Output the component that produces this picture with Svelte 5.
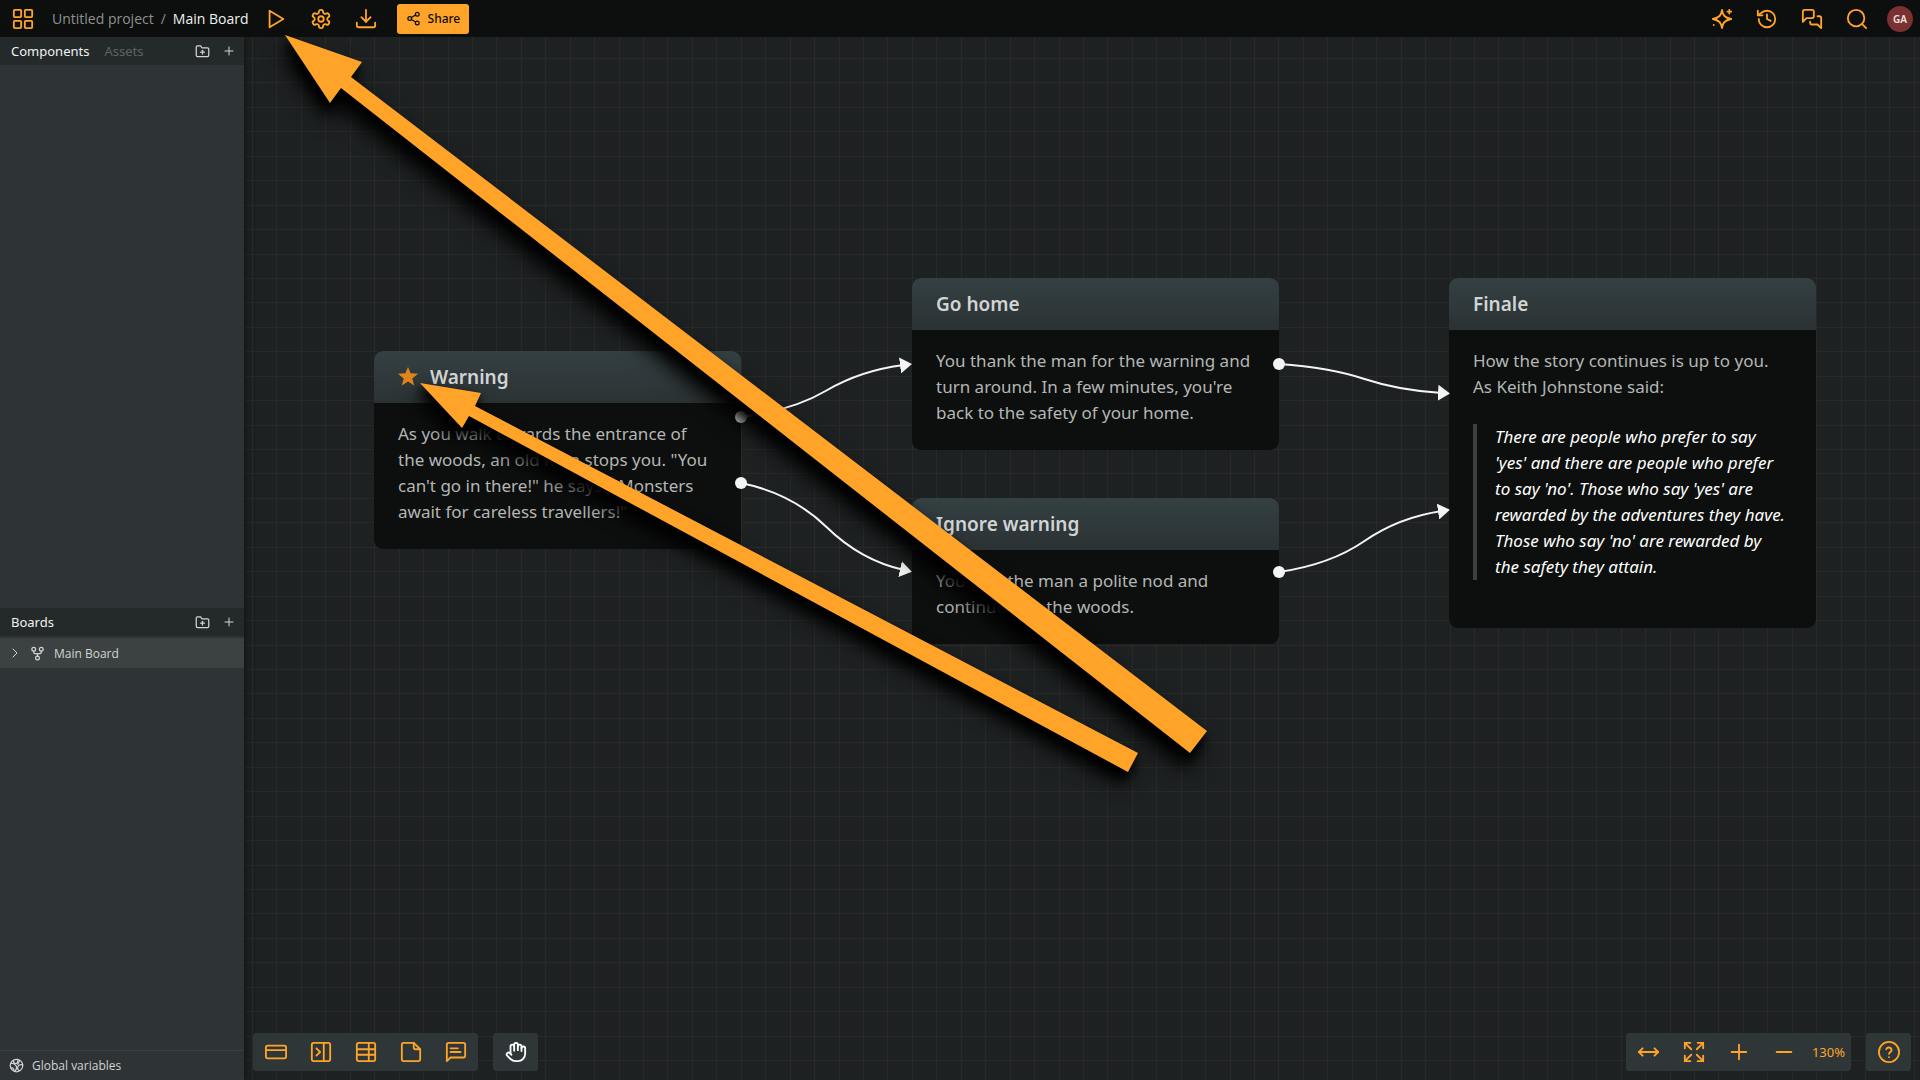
<script lang="ts">
	const icons: Record<string, string[]> = {
		grid: ['M3 2h6a1 1 0 0 1 1 1v6a1 1 0 0 1-1 1H3a1 1 0 0 1-1-1V3a1 1 0 0 1 1-1z', 'M15 2h6a1 1 0 0 1 1 1v6a1 1 0 0 1-1 1h-6a1 1 0 0 1-1-1V3a1 1 0 0 1 1-1z', 'M3 14h6a1 1 0 0 1 1 1v6a1 1 0 0 1-1 1H3a1 1 0 0 1-1-1v-6a1 1 0 0 1 1-1z', 'M15 14h6a1 1 0 0 1 1 1v6a1 1 0 0 1-1 1h-6a1 1 0 0 1-1-1v-6a1 1 0 0 1 1-1z'],
		play: ['M5 3v18l15-9z'],
		gear: ['M12.22 2h-.44a2 2 0 0 0-2 2v.18a2 2 0 0 1-1 1.73l-.43.25a2 2 0 0 1-2 0l-.15-.08a2 2 0 0 0-2.73.73l-.22.38a2 2 0 0 0 .73 2.73l.15.1a2 2 0 0 1 1 1.72v.51a2 2 0 0 1-1 1.74l-.15.09a2 2 0 0 0-.73 2.73l.22.38a2 2 0 0 0 2.73.73l.15-.08a2 2 0 0 1 2 0l.43.25a2 2 0 0 1 1 1.73V20a2 2 0 0 0 2 2h.44a2 2 0 0 0 2-2v-.18a2 2 0 0 1 1-1.73l.43-.25a2 2 0 0 1 2 0l.15.08a2 2 0 0 0 2.73-.73l.22-.39a2 2 0 0 0-.73-2.73l-.15-.08a2 2 0 0 1-1-1.74v-.5a2 2 0 0 1 1-1.74l.15-.09a2 2 0 0 0 .73-2.73l-.22-.38a2 2 0 0 0-2.73-.73l-.15.08a2 2 0 0 1-2 0l-.43-.25a2 2 0 0 1-1-1.73V4a2 2 0 0 0-2-2z', 'M9 12a3 3 0 1 0 6 0 3 3 0 1 0-6 0'],
		download: ['M12 2v13', 'M7 10l5 5 5-5', 'M2 16v3a2 2 0 0 0 2 2h16a2 2 0 0 0 2-2v-3'],
		share: ['M15 5a3 3 0 1 0 6 0 3 3 0 1 0-6 0', 'M3 12a3 3 0 1 0 6 0 3 3 0 1 0-6 0', 'M15 19a3 3 0 1 0 6 0 3 3 0 1 0-6 0', 'M8.6 13.5l6.8 4', 'M15.4 6.5l-6.8 4'],
		sparkle: ['M12 2c.8 6 3 8.600 10 10-7 1.400-9.200 4-10 10-.8-6-3-8.600-10-10 7-1.400 9.200-4 10-10z', 'M20 2v4', 'M18 4h4', 'M3 18.500v.1'],
		history: ['M3 12a9 9 0 1 0 9-9 9.75 9.75 0 0 0-6.74 2.74L2 8', 'M2 3v5h5', 'M12 7v5l4 2'],
		chats: ['M14 9a2 2 0 0 1-2 2H6l-4 4V4c0-1.100.9-2 2-2h8a2 2 0 0 1 2 2v5Z', 'M18 9h2a2 2 0 0 1 2 2v11l-4-4h-6a2 2 0 0 1-2-2v-1'],
		search: ['M2 11a9 9 0 1 0 18 0 9 9 0 1 0-18 0', 'M22 22l-4.600-4.600'],
		folder: ['M20 20H4a2 2 0 0 1-2-2V5a2 2 0 0 1 2-2h5l2 3h9a2 2 0 0 1 2 2v10a2 2 0 0 1-2 2z', 'M12 10v6', 'M9 13h6'],
		plus: ['M4 12h16', 'M12 4v16'],
		minus: ['M4 12h16'],
		chevron: ['M8 4l8 8-8 8'],
		board: ['M3 5a3 3 0 1 0 6 0 3 3 0 1 0-6 0', 'M15 5a3 3 0 1 0 6 0 3 3 0 1 0-6 0', 'M9 19a3 3 0 1 0 6 0 3 3 0 1 0-6 0', 'M6 8v2a2 2 0 0 0 2 2h8a2 2 0 0 0 2-2V8', 'M12 12v4'],
		globe: ['M2 12a10 10 0 1 0 20 0 10 10 0 1 0-20 0', 'M3 8c4 0 6 1 8 4s1 6-1 9', 'M7 4c0 4 2 5 4 5s4-3 3-7', 'M22 11c-4-1-7 0-8 3s1 6 3 6', 'M3 16c2-1 4 0 5 4', 'M17 4l-3 6'],
		card: ['M3 5h18a2 2 0 0 1 2 2v10a2 2 0 0 1-2 2H3a2 2 0 0 1-2-2V7a2 2 0 0 1 2-2z', 'M1 10h22'],
		panel: ['M4 2h16a2 2 0 0 1 2 2v16a2 2 0 0 1-2 2H4a2 2 0 0 1-2-2V4a2 2 0 0 1 2-2z', 'M15 2v20', 'M7 8l4 4-4 4'],
		table: ['M4 2h16a2 2 0 0 1 2 2v16a2 2 0 0 1-2 2H4a2 2 0 0 1-2-2V4a2 2 0 0 1 2-2z', 'M15 2v20', 'M2 9h20', 'M2 15h20'],
		note: ['M15 2H4a2 2 0 0 0-2 2v16a2 2 0 0 0 2 2h16a2 2 0 0 0 2-2V9z', 'M15 2v5a2 2 0 0 0 2 2h5'],
		comment: ['M22 16a2 2 0 0 1-2 2H6l-4 4V4a2 2 0 0 1 2-2h16a2 2 0 0 1 2 2z', 'M6 8h8', 'M6 12h11'],
		hand: ['M18 11V6a2 2 0 0 0-4 0', 'M14 10V4a2 2 0 0 0-4 0v2', 'M10 10.500V6a2 2 0 0 0-4 0v8', 'M18 8a2 2 0 1 1 4 0v6a8 8 0 0 1-8 8h-2c-2.800 0-4.500-.86-5.990-2.340l-3.600-3.600a2 2 0 0 1 2.830-2.820L7 15'],
		width: ['M18 8l4 4-4 4', 'M1 12h21', 'M5 8l-4 4 4 4'],
		expand: ['M15 15l7 7', 'M15 9l7-7', 'M22 16v6h-6', 'M22 8V2h-6', 'M2 16v6h6', 'M2 22l7-7', 'M2 8V2h6', 'M9 9L2 2'],
		help: ['M1 12a11 11 0 1 0 22 0 11 11 0 1 0-22 0', 'M9 9a3 3 0 0 1 5.800 1c0 2-2.800 2.500-2.800 4', 'M12 17.500v.1'],
	};

	const tools = [
		{ icon: 'card', label: 'Element' },
		{ icon: 'panel', label: 'Jumper' },
		{ icon: 'table', label: 'Branch' },
		{ icon: 'note', label: 'Note' },
		{ icon: 'comment', label: 'Comment' },
	];

	const zoomTools = [
		{ icon: 'width', label: 'Fit width' },
		{ icon: 'expand', label: 'Fit board' },
		{ icon: 'plus', label: 'Zoom in' },
		{ icon: 'minus', label: 'Zoom out' },
	];

	const topRight = [
		{ icon: 'sparkle', label: 'Assistant' },
		{ icon: 'history', label: 'History' },
		{ icon: 'chats', label: 'Comments' },
		{ icon: 'search', label: 'Search' },
	];

	// Board coordinates, origin at the top left of the canvas
	const nodes = [
		{ id: 'warning', x: 130, y: 314, title: 'Warning', start: true, text: `As you walk towards the entrance of the woods, an old man stops you. "You can't go in there!" he says. "Monsters await for careless travellers!"` },
		{ id: 'home', x: 668, y: 241, title: 'Go home', text: `You thank the man for the warning and turn around. In a few minutes, you're back to the safety of your home.` },
		{ id: 'ignore', x: 668, y: 461, title: 'Ignore warning', text: 'You give the man a polite nod and continue into the woods.' },
		{
			id: 'finale',
			x: 1205,
			y: 241,
			title: 'Finale',
			text: 'How the story continues is up to you.\nAs Keith Johnstone said:',
			quote: `There are people who prefer to say 'yes' and there are people who prefer to say 'no'. Those who say 'yes' are rewarded by the adventures they have. Those who say 'no' are rewarded by the safety they attain.`,
		},
	];

	const edges = [
		{ x1: 497, y1: 380, x2: 668, y2: 327 },
		{ x1: 497, y1: 446, x2: 668, y2: 534 },
		{ x1: 1035, y1: 327, x2: 1206, y2: 357 },
		{ x1: 1035, y1: 535, x2: 1206, y2: 473 },
	];

	function edgePath({ x1, y1, x2, y2 }: { x1: number; y1: number; x2: number; y2: number }) {
		const dx = x2 - x1;
		const dy = y2 - y1;
		const back = dy > 0 ? -1 : 1;
		return `M${x1} ${y1}Q${x1 + dx * 0.3} ${y1 + dy * 0.12} ${x1 + dx / 2} ${y1 + dy / 2}Q${x2 - dx * 0.3} ${y2 - dy * 0.12} ${x2 - 8} ${y2 + back}`;
	}

	const zoom = 1.3;
	const cell = 18.8 * zoom;
	const columns = Array.from({ length: 160 }, (_, i) => Math.round(8 + i * cell));
	const rows = Array.from({ length: 90 }, (_, i) => Math.round(21 + i * cell));
</script>

{#snippet icon(name: string, size = 'md')}
	<svg class="icon {size}" viewBox="0 0 24 24" aria-hidden="true">
		{#each icons[name] as d}
			<path {d} />
		{/each}
	</svg>
{/snippet}

<div class="app">
	<header class="topbar">
		<button class="tool" aria-label="Projects">{@render icon('grid')}</button>
		<nav class="crumbs">
			<a href="#project">Untitled project</a>
			<span>/</span>
			<a class="current" href="#board">Main Board</a>
		</nav>
		<button class="tool" aria-label="Play">{@render icon('play')}</button>
		<button class="tool" aria-label="Settings">{@render icon('gear')}</button>
		<button class="tool" aria-label="Export">{@render icon('download')}</button>
		<button class="share">{@render icon('share', 'sm')}Share</button>
		<div class="spacer"></div>
		{#each topRight as item}
			<button class="tool" aria-label={item.label}>{@render icon(item.icon)}</button>
		{/each}
		<button class="avatar">GA</button>
	</header>

	<div class="main">
		<aside class="sidebar">
			<section class="components">
				<div class="panel-head">
					<button class="tab active">Components</button>
					<button class="tab">Assets</button>
					<div class="spacer"></div>
					<button class="mini" aria-label="New component folder">{@render icon('folder', 'sm')}</button>
					<button class="mini" aria-label="New component">{@render icon('plus', 'xs')}</button>
				</div>
			</section>
			<section class="boards">
				<div class="panel-head">
					<h2>Boards</h2>
					<div class="spacer"></div>
					<button class="mini" aria-label="New board folder">{@render icon('folder', 'sm')}</button>
					<button class="mini" aria-label="New board">{@render icon('plus', 'xs')}</button>
				</div>
				<button class="board-row">
					{@render icon('chevron', 'xs')}
					{@render icon('board', 'sm')}
					Main Board
				</button>
			</section>
			<button class="globals">{@render icon('globe', 'sm')}Global variables</button>
		</aside>

		<main class="canvas">
			<svg class="layer" aria-hidden="true">
				<g class="grid-lines">
					{#each columns as x}
						<rect {x} y="0" width="1" height="100%" />
					{/each}
					{#each rows as y}
						<rect x="0" {y} width="100%" height="1" />
					{/each}
				</g>
			</svg>

			{#each nodes as node (node.id)}
				<article class="node" style="left: {node.x}px; top: {node.y}px">
					<h3>
						{#if node.start}
							<svg class="star" viewBox="0 0 20 20" aria-hidden="true">
								<path d="M10 0l2.600 6.300 7.400.5-5.700 4.600 1.900 7.200L10 14.600l-6.200 4 1.900-7.200L0 6.800l7.400-.5z" />
							</svg>
						{/if}
						{node.title}
					</h3>
					<div class="body">
						<p>{node.text}</p>
						{#if node.quote}
							<blockquote>{node.quote}</blockquote>
						{/if}
					</div>
				</article>
			{/each}

			<svg class="layer" aria-hidden="true">
				<defs>
					<marker id="tip" viewBox="0 0 12 16" refX="4" refY="8" markerWidth="12" markerHeight="16" markerUnits="userSpaceOnUse" orient="auto">
						<path d="M0 0l12 8-12 8z" fill="#f4f4f4" />
					</marker>
				</defs>
				{#each edges as edge}
					<path class="edge" d={edgePath(edge)} marker-end="url(#tip)" />
					<circle class="port" cx={edge.x1} cy={edge.y1} r="6" />
				{/each}
			</svg>

			<div class="dock">
				<div class="group">
					{#each tools as item}
						<button class="tool" aria-label={item.label}>{@render icon(item.icon)}</button>
					{/each}
				</div>
				<div class="group pan">
					<button class="tool" aria-label="Pan">{@render icon('hand')}</button>
				</div>
				<div class="spacer"></div>
				<div class="group">
					{#each zoomTools as item}
						<button class="tool" aria-label={item.label}>{@render icon(item.icon)}</button>
					{/each}
					<button class="tool">130%</button>
				</div>
				<div class="group">
					<button class="tool" aria-label="Help">{@render icon('help')}</button>
				</div>
			</div>
		</main>
	</div>

	<!-- Annotation arrows lie over the whole window -->
	<svg class="layer arrows" aria-hidden="true">
		<path class="large" d="M285 35L362 62L351 77L1207 731L1190 753L341 88L330 103Z" />
		<path class="small" d="M420 383L481 393L475 406L1138 753L1128 772L469 416L462 428Z" />
	</svg>
</div>

<style>
	:global(body) {
		margin: 0;
		background: #1e2122;
	}

	.app {
		position: relative;
		display: flex;
		flex-direction: column;
		height: 100vh;
		overflow: hidden;
		font-family: 'Noto Sans', 'Open Sans', sans-serif;
		font-size: 13px;
		color: #d2d4d4;
	}

	button {
		display: flex;
		align-items: center;
		padding: 0;
		border: 0;
		background: none;
		font: inherit;
		color: inherit;
		cursor: pointer;
	}

	.spacer {
		flex: 1;
	}

	.icon {
		flex: none;
		width: 22px;
		height: 22px;
		fill: none;
		stroke: currentColor;
		stroke-width: 2;
		stroke-linecap: round;
		stroke-linejoin: round;
	}

	.icon.sm {
		width: 15px;
		height: 15px;
	}

	.icon.xs {
		width: 12px;
		height: 12px;
	}

	.topbar {
		display: flex;
		align-items: center;
		height: 37px;
		flex: none;
		padding-right: 7px;
		background: #0c0f0d;
	}

	.tool {
		justify-content: center;
		width: 45px;
		height: 38px;
		color: #ffa428;
	}

	.crumbs {
		display: flex;
		gap: 7px;
		margin: 0 5px 0 7px;
		font-family: 'Open Sans', 'Noto Sans', sans-serif;
		font-size: 14px;
		color: #8f9190;
	}

	.crumbs a {
		color: inherit;
		text-decoration: none;
	}

	.crumbs .current {
		font-weight: 500;
		color: #f0f1f1;
	}

	.share {
		gap: 7px;
		height: 30px;
		margin-left: 8px;
		padding: 0 9px;
		border-radius: 3px;
		background: #ffa428;
		font-size: 12px;
		font-weight: 500;
		color: #0c0f0d;
	}

	.avatar {
		justify-content: center;
		width: 26px;
		height: 26px;
		margin-left: 8px;
		border-radius: 50%;
		background: #7b3031;
		font-size: 10px;
		font-weight: 600;
		color: #f0e4e4;
	}

	.main {
		display: flex;
		flex: 1;
		min-height: 0;
	}

	.sidebar {
		z-index: 1;
		display: flex;
		flex-direction: column;
		width: 244px;
		flex: none;
		background: #2e3335;
		box-shadow: 0 0 8px #0c0f0d;
	}

	.components {
		flex: 22;
	}

	.boards {
		flex: 17;
	}

	.panel-head {
		display: flex;
		align-items: center;
		height: 28px;
		padding: 0 9px 0 11px;
		background: #242a2a;
	}

	.panel-head h2 {
		margin: 0;
		font-size: 13px;
		font-weight: 400;
		color: #f0f1f1;
	}

	.tab {
		margin-right: 15px;
		color: #5d6262;
	}

	.tab.active {
		color: #f0f1f1;
	}

	.mini {
		margin-left: 13px;
	}

	.board-row {
		gap: 9px;
		width: 100%;
		height: 30px;
		margin-top: 2px;
		padding-left: 9px;
		background: #3c4241;
		font-family: 'Open Sans', 'Noto Sans', sans-serif;
		font-size: 12px;
	}

	.globals {
		gap: 8px;
		height: 30px;
		padding-left: 9px;
		border-top: 1px solid #3a3f40;
		font-family: 'Open Sans', 'Noto Sans', sans-serif;
		font-size: 12px;
	}

	.canvas {
		position: relative;
		display: flex;
		flex-direction: column;
		justify-content: flex-end;
		flex: 1;
		overflow: hidden;
		background: #1e2122;
	}

	.layer {
		position: absolute;
		inset: 0;
		width: 100%;
		height: 100%;
		pointer-events: none;
	}

	.grid-lines {
		fill: #2a2928;
	}

	.node {
		position: absolute;
		width: 367px;
		overflow: hidden;
		border-radius: 9px;
		background: #0c0f0d;
	}

	.node h3 {
		display: flex;
		align-items: center;
		gap: 12px;
		height: 52px;
		margin: 0;
		padding: 0 24px;
		background: linear-gradient(#344042, #2b3234);
		font-size: 19px;
		font-weight: 600;
		color: #d2d4d4;
	}

	.star {
		width: 20px;
		height: 20px;
		fill: #df851c;
	}

	.body {
		padding: 18px 24px 24px;
		font-size: 17px;
		line-height: 26px;
		color: #b4b6b5;
	}

	.body p {
		margin: 0;
		white-space: pre-line;
	}

	.body blockquote {
		margin: 24px 4px 24px 0;
		padding-left: 18px;
		border-left: 4px solid #3e3e3e;
		font-style: italic;
		color: #fff;
	}

	.edge {
		fill: none;
		stroke: #f4f4f4;
		stroke-width: 2;
	}

	.port {
		fill: #f4f4f4;
	}

	.dock {
		position: relative;
		display: flex;
		gap: 15px;
		padding: 0 9px;
		margin-bottom: 9px;
	}

	.group {
		display: flex;
		border-radius: 3px;
		background: #2e3638;
	}

	.pan .tool {
		color: #fff;
	}

	.arrows {
		z-index: 2;
		fill: #ffa428;
	}

	.large {
		filter: drop-shadow(-2px 6px 4px #000) drop-shadow(-3px 11px 9px #000);
	}

	.small {
		filter: drop-shadow(-2px 5px 4px #000) drop-shadow(-3px 9px 8px #000);
	}
</style>
